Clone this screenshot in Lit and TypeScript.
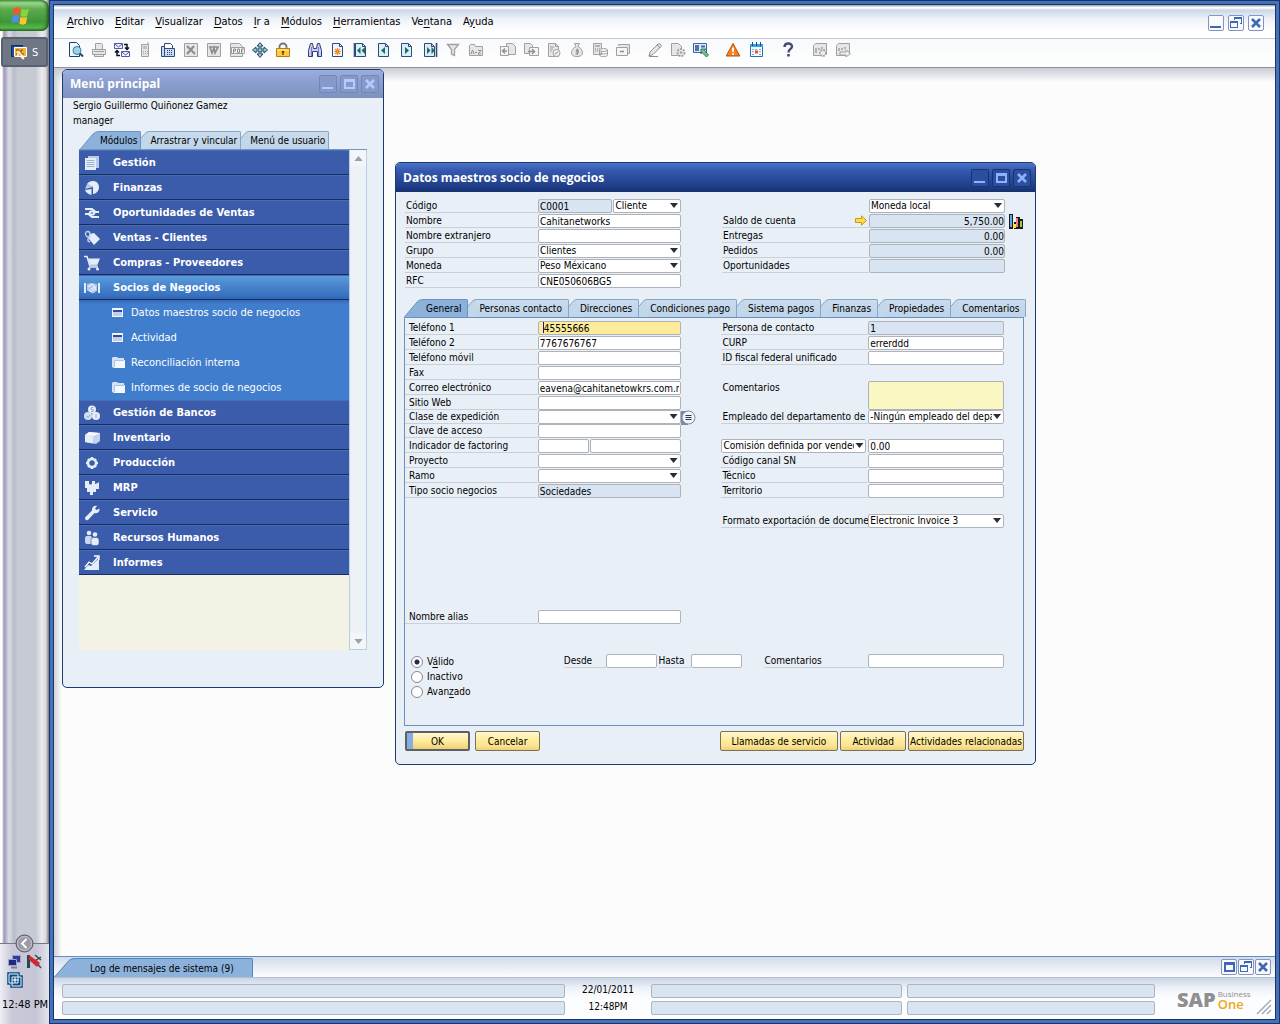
import { LitElement, html, css, svg, nothing } from "lit";
import { customElement, state } from "lit/decorators.js";
import { classMap } from "lit/directives/class-map.js";

type Accel = [string, string, string];

const MENUS: Accel[] = [
  ["", "A", "rchivo"], ["", "E", "ditar"], ["", "V", "isualizar"], ["", "D", "atos"], ["", "I", "r a"],
  ["", "M", "ódulos"], ["", "H", "erramientas"], ["Ve", "n", "tana"], ["A", "y", "uda"],
];

/* ---- toolbar glyphs, 16 x 16 ---- */
const page = (fill: string, stroke: string) => svg`<path d="M2.500 1.500h7l3 3v10h-10z" fill=${fill} stroke=${stroke}/><path d="M9.500 1.500v3h3" fill="none" stroke=${stroke}/>`;
const G = "#a0a0a0";
const L = "#e6e6e6";
const N = "#2f4a7c";

const ICONS: Record<string, unknown> = {
  preview: svg`<path d="M1.500 .5h7l3 3v11h-10z" fill="#eef6ff" stroke="#24406f"/><circle cx="9" cy="8.500" r="4" fill="#9bd4e8" stroke="#3d7b9b"/><path d="M12 11.500l3 3" stroke="#24406f" stroke-width="2"/>`,
  print: svg`<path d="M4.500 7V1.500h6l1 1V7M1.500 7.500h13v5h-13zM3.500 12.500h9v2h-9z" fill=${L} stroke=${G}/><path d="M3 9.500h10" stroke=${G}/>`,
  mail: svg`<path d="M.5 1.500h8v5h-8zM7.500 9.500h8v5h-8z" fill="#eef0ff" stroke="#5258a5"/><path d="M1 2l3.500 3L8 2M8 10l3.500 3L15 10" fill="none" stroke="#5258a5"/><path d="M10 2.500h3V7M11 5.500l2 2 2-2M6 13.500H3V9M1 10.500l2-2 2 2" fill="none" stroke="#111" stroke-width="1.500"/>`,
  phone: svg`<path d="M4.500 2.500h7v12h-7zM11 2.500V0" fill=${L} stroke=${G}/><path d="M6 4h4v3H6z" fill="#bdbdbd"/><path d="M6 9h1v1H6zM8 9h1v1H8zM10 9h1v1h-1zM6 11h1v1H6zM8 11h1v1H8zM10 11h1v1h-1z" fill=${G}/>`,
  fax: svg`<path d="M4.500 7V1.500h6l2 2V7" fill="#fff" stroke=${N}/><path d="M1.500 4.500h3v10h-3zM4.500 6.500h10v8h-10z" fill="#c9d8ef" stroke=${N}/><path d="M7 8h1v1H7zM9 8h1v1H9zM11 8h1v1h-1zM7 10h1v1H7zM9 10h1v1H9zM11 10h1v1h-1zM7 12h1v1H7zM9 12h1v1H9zM11 12h1v1h-1z" fill=${N}/>`,
  excel: svg`<path d="M1.500 1.500h13v13h-13z" fill=${L} stroke=${G}/><path d="M4 4l8 8M11 4l-7 8" stroke="#8e8e8e" stroke-width="2.200"/>`,
  word: svg`<path d="M1.500 1.500h13v13h-13z" fill=${L} stroke=${G}/><path d="M3 5h10M4 5l2 6 2-5 1 5 3-6" fill="none" stroke="#8e8e8e" stroke-width="1.700"/>`,
  pdf: svg`<path d="M1.500 1.500h9l3 3v10h-12z" fill=${L} stroke=${G}/><path d="M2.500 5.500h13v6h-13z" fill="#f4f4f4" stroke=${G}/><path d="M4.500 11V7h2v2h-2M8.500 7v3.500h2V7zM12.500 11V7h2.500M12.500 9H14" fill="none" stroke="#8e8e8e"/>`,
  move: svg`<path d="M8 .7L11 4H9v3h3V5l3.500 3-3.500 3V9H9v3h2l-3 3.400L5 12h2V9H4v2L.5 8 4 5v2h3V4H5z" fill="#8fc9c4" stroke="#23406f"/>`,
  lock: svg`<path d="M4.500 7V4.500a3.500 3 0 0 1 7 0V7" fill="none" stroke="#77736a" stroke-width="1.800"/><path d="M1.500 6.500h13v8h-13z" fill="#ffc93c" stroke="#b97b12"/><path d="M2 8h12" stroke="#fff0a8"/><circle cx="8" cy="10" r="1.300" fill="#6b4300"/><path d="M8 10v3" stroke="#6b4300" stroke-width="1.300"/>`,
  find: svg`<path d="M3.500 1.500h2l1 5h3l1-5h2l2 7v6h-4v-5h-5v5h-4v-6z" fill="#c9cef2" stroke="#303a79"/><path d="M4.500 5v9M11.500 5v9" stroke="#747fc1"/>`,
  add: svg`${page("#eef6ff", N)}<path d="M7.500 6v7M4 9.500h7M5 7l5 5M10 7l-5 5" stroke="#f08a24" stroke-width="1.200"/>`,
  first: svg`${page("#d9eef5", N)}<path d="M1.500 1v14" stroke=${N} stroke-width="1.600"/><path d="M7.500 5v7L4 8.500zM12 5v7L8.500 8.500z" fill="#1f6b62"/>`,
  prev: svg`${page("#d9eef5", N)}<path d="M9 5v7L5 8.500z" fill="#1f6b62"/>`,
  next: svg`${page("#d9eef5", N)}<path d="M6 5v7l4-3.500z" fill="#1f6b62"/>`,
  last: svg`${page("#d9eef5", N)}<path d="M14.500 1v14" stroke=${N} stroke-width="1.600"/><path d="M5 5v7l3.500-3.500zM9.500 5v7L13 8.500z" fill="#1f6b62"/>`,
  filter: svg`<path d="M2.500 2.500h11l-4 5v6l-3-1.500V7.500z" fill=${L} stroke=${G} stroke-width="1.300"/>`,
  sort: svg`<path d="M1.500 13.500v-10l1-1h4l1 2h7v9z" fill=${L} stroke=${G}/><path d="M3 12l1.500-4L6 12M7 10.500h2M10 8.500h3l-3 3.500h3" fill="none" stroke="#8e8e8e"/>`,
  copyFrom: svg`<path d="M6.500 1.500h6l3 3v8h-9z" fill=${L} stroke=${G}/><path d="M.5 4.500h8v9h-8z" fill="#f4f4f4" stroke=${G}/><path d="M7 9H2.500M5 6.500L2.500 9 5 11.500" fill="none" stroke="#8e8e8e" stroke-width="1.300"/>`,
  copyTo: svg`<path d="M1.500 1.500h6l2 2v8h-8z" fill=${L} stroke=${G}/><path d="M6.500 5.500h9v8h-9z" fill="#f4f4f4" stroke=${G}/><path d="M5 9.500h6.500M9 7l2.500 2.500L9 12" fill="none" stroke="#8e8e8e" stroke-width="1.300"/>`,
  profit: svg`${page(L, G)}<path d="M4 5h4M4 7h3M4 9h2" stroke=${G}/><circle cx="10.500" cy="11" r="3.500" fill="#eee" stroke=${G}/><path d="M9 12l3-2" stroke="#8e8e8e"/>`,
  money: svg`<path d="M5.500 1.500h5l-1.500 3c3 1.500 4.500 4 4.500 6.500 0 2.500-2 3.500-5.500 3.500S2.500 13.500 2.500 11c0-2.500 1.500-5 4.500-6.500z" fill=${L} stroke=${G}/><path d="M10 8H7.500L7 9.500h2.500l-.5 2H6.500M8.200 6.500v6.500" fill="none" stroke="#8e8e8e"/>`,
  calc: svg`<path d="M1.500 1.500h8v11h-8z" fill=${L} stroke=${G}/><path d="M3 4h5M3 7h1M5 7h1M7 7h1M3 9h1M5 9h1" stroke=${G} stroke-width="1.400"/><ellipse cx="11.500" cy="8" rx="4" ry="1.500" fill="#f4f4f4" stroke=${G}/><path d="M7.500 8v5c0 2 8 2 8 0V8M7.500 10.500c0 2 8 2 8 0" fill="none" stroke=${G}/>`,
  card: svg`<path d="M3.500 4V2.500h11v9h-2" fill=${L} stroke=${G}/><path d="M1.500 5.500h11v8h-11z" fill="#f4f4f4" stroke=${G}/><path d="M5 9.500h4" stroke="#8e8e8e" stroke-width="1.500"/>`,
  pencil: svg`<path d="M2 14l1-4 8-8c1.500-1 3.500.5 3 2.500l-8 8z" fill=${L} stroke="#8f8f8f"/><path d="M2 14.500h9M10 3l3 3" stroke="#8f8f8f"/>`,
  formGear: svg`<path d="M1.500 1.500h7l3 3v9h-10z" fill=${L} stroke=${G}/><circle cx="11" cy="10.500" r="3.500" fill="#eee" stroke=${G} stroke-width="2" stroke-dasharray="2 1"/><circle cx="11" cy="10.500" r="1.300" fill=${G}/>`,
  query: svg`<path d="M.5 1.500h13v9H.5z" fill="#dcecfb" stroke="#3668ae"/><path d="M2 4h4M2 6h4M2 8h4" stroke="#2a4b8d" stroke-width="1.300"/><path d="M8 3.500h4v2H8z" fill="#3668ae"/><path d="M8 7h5l-1.500 1.500 4 4.500-2 2-4.500-4.500L8 12z" fill="#6cc48f" stroke="#1c6546" stroke-width=".8"/>`,
  alert: svg`<path d="M8 1.500l6.800 12.500H1.200z" fill="#f58220" stroke="#b24f0b" stroke-linejoin="round"/><path d="M8 5.500v4.500M8 11.200V13" stroke="#fff" stroke-width="1.800"/>`,
  calendar: svg`<path d="M2.500 2.500h12v12h-12z" fill="#f4fbff" stroke="#2b6db4"/><path d="M2 2h13v3H2z" fill="#3aa0dc"/><path d="M4.500 0v4M8.500 0v4M12.500 0v4" stroke="#0f4f93"/><path d="M4 7h2v1H4zM7 7h2v1H7zM11 7h2v1h-2zM4 9h2v1H4zM11 9h2v1h-2zM4 12h2v1H4zM11 12h2v1h-2z" fill="#84a9c9"/><path d="M7 8.500h3v3H7z" fill="#ee4d33"/>`,
  help: svg`<path d="M4.500 5c0-4.500 7.500-4.500 7.500-.5 0 2.500-3.500 2.500-3.500 6" fill="none" stroke="#454a76" stroke-width="2.400"/><path d="M7.200 12h2.600v2.500H7.200z" fill="#454a76"/>`,
  gridGear: svg`<path d="M1.500 3.500l2-2h11v10l-2 2h-11z" fill=${L} stroke=${G}/><path d="M4 6v5M7 6v2M10 5v2" stroke=${G} stroke-width="1.500"/><circle cx="11" cy="11" r="3" fill="#eee" stroke=${G} stroke-width="1.800" stroke-dasharray="1.800 1"/>`,
  gridOut: svg`<path d="M1.500 3.500l2-2h11v10l-2 2h-11z" fill=${L} stroke=${G}/><path d="M4 6v3M7 6v2M10 5v2" stroke=${G} stroke-width="1.500"/><path d="M5 10h6V8l4.500 3.500L11 15v-2H5z" fill="#eee" stroke=${G}/>`,
};

const TOOLBAR: { name: string; label: string; off?: boolean }[][] = [
  [
    { name: "preview", label: "Presentación preliminar" }, { name: "print", label: "Imprimir", off: true },
    { name: "mail", label: "Correo" }, { name: "phone", label: "SMS", off: true }, { name: "fax", label: "Fax" },
    { name: "excel", label: "Excel", off: true }, { name: "word", label: "Word", off: true },
    { name: "pdf", label: "PDF", off: true }, { name: "move", label: "Iniciar aplicación" }, { name: "lock", label: "Bloquear" },
  ],
  [
    { name: "find", label: "Buscar" }, { name: "add", label: "Crear" }, { name: "first", label: "Primer registro" },
    { name: "prev", label: "Registro anterior" }, { name: "next", label: "Registro siguiente" },
    { name: "last", label: "Último registro" }, { name: "filter", label: "Filtrar", off: true },
    { name: "sort", label: "Clasificar", off: true },
  ],
  [
    { name: "copyFrom", label: "Documento base", off: true }, { name: "copyTo", label: "Documento destino", off: true },
    { name: "profit", label: "Beneficio bruto", off: true }, { name: "money", label: "Medios de pago", off: true },
    { name: "calc", label: "Volumen y peso", off: true }, { name: "card", label: "Diario", off: true },
  ],
  [{ name: "pencil", label: "Modo de edición", off: true }, { name: "formGear", label: "Configuración", off: true }, { name: "query", label: "Consultas" }],
  [{ name: "alert", label: "Alertas" }, { name: "calendar", label: "Calendario" }],
  [{ name: "help", label: "Ayuda" }],
  [{ name: "gridGear", label: "Diseño", off: true }, { name: "gridOut", label: "Exportar diseño", off: true }],
];

/* ---- module glyphs, 16 x 16, light on blue ---- */
const W = "#e4edf8";
const B = "#3b5bab";
const MODULE_ICONS: Record<string, unknown> = {
  docs: svg`<path d="M4 1h11v12H4z" fill="#b8c8e6"/><path d="M1 3h11v12H1z" fill=${W}/><path d="M2.500 5.500h8M2.500 7.500h8M2.500 9.500h8M2.500 11.500h8" stroke="#9db0d8"/>`,
  pie: svg`<path d="M9 7L3 4C6-1 15 0 15 7c0 4-3 7-6 7z" fill=${W}/><path d="M7.500 9v6C4 14.500 1.500 12 1 10z" fill=${W}/><path d="M3 4l6 3-8 2z" fill="#b9caea"/>`,
  opp: svg`<path d="M1 4h7l3 2.500H6.500L5 9H1M15 12H8l-3-2.500h4.500L11 7h4" fill="none" stroke=${W} stroke-width="2"/>`,
  tag: svg`<path d="M6 4l4-1 6 6-6 6-5-6z" fill=${W}/><path d="M6 6C4 8 1 6 1.500 3.500 2 .5 6 1 6 4c0 3-3 4-2 7l2 1" fill="none" stroke="#c2d2ee" stroke-width="1.400"/>`,
  cart: svg`<path d="M0 1.500h3l2.500 8.500h8" fill="none" stroke=${W} stroke-width="1.500"/><path d="M4 3.500h12l-2.500 6H6z" fill=${W}/><path d="M5 12h9" stroke=${W} stroke-width="1.500"/><circle cx="5" cy="14" r="1.500" fill=${W}/><circle cx="13.500" cy="14" r="1.500" fill=${W}/>`,
  shake: svg`<path d="M0 3h2v10H0zM14 3h2v10h-2z" fill=${W}/><path d="M3 4l4-1 6 1v7l-4 2.500-6-3z" fill="#a9c8ec"/><path d="M4 7l4-3 4 4M5 10l3 2M7 8l3 3M9 7l3 3" stroke=${W} stroke-width="1.200" fill="none"/>`,
  coins: svg`<circle cx="8" cy="4.500" r="4" fill=${W}/><circle cx="4" cy="11" r="4" fill="#d1dff2"/><circle cx="12" cy="11" r="4" fill=${W}/><path d="M9.500 2.500h-2l-.3 2h2v2H7" fill="none" stroke="#8ea8d6"/><path d="M3 11l1 1.500L6 10M12 9v4" stroke="#8ea8d6" fill="none"/>`,
  box: svg`<path d="M1 5l4-3 11 1v8l-4 3L1 12z" fill="#c7d0ee"/><path d="M1 5l8 1v7.500L1 12z" fill=${W}/><path d="M5 2l11 1-6 3-9-1z" fill="#f6f9ff"/>`,
  gear: svg`<circle cx="8" cy="8" r="4" fill="none" stroke=${W} stroke-width="2.500"/><path d="M8 2v2.500M8 11.500V14M2 8h2.500M11.500 8H14M4 4l1.500 1.500M10.500 10.500L12 12M12 4l-1.500 1.500M5.500 10.500L4 12" stroke=${W} stroke-width="2.400"/>`,
  puzzle: svg`<path d="M1 1h4v2c0 2 3 2 3 0V1h3v3l4-1v6h-3v3H9v3H6v-3H3V8H1z" fill=${W}/><path d="M12 4l3-2v6" fill=${W}/>`,
  wrench: svg`<path d="M1 12.500l7-7C7.500 2.500 10 0 13 1l-2 2.500 1.500 1.500L15.500 3.500C16 7 13 9 10.500 8L4 15c-2 1-3.500-1-3-2.500z" fill=${W}/>`,
  people: svg`<circle cx="5" cy="3" r="2.300" fill=${W}/><rect x="1" y="6" width="7" height="8" rx="2" fill="#c9d7ef"/><circle cx="11" cy="4.500" r="2.300" fill=${W}/><rect x="7" y="7.500" width="8" height="8" rx="2.500" fill=${W} stroke=${B} stroke-width=".6"/>`,
  chart: svg`<path d="M0 15l4-5 3 1 5-5 3-3v12z" fill=${W}/><path d="M1 12l4-5 3 2 6-7M10 1h5v4" fill="none" stroke="#fff" stroke-width="1.300"/>`,
  win: svg`<path d="M0 3h11v9H0z" fill="#f2f5fb"/><path d="M1 5h9v2H1z" fill="#2e4e9d"/><path d="M1 7h9v4H1z" fill="#c3cfe8"/>`,
  folder: svg`<path d="M0 3l1-1h4l1 1h6v2H3l-1 8-2-1z" fill="#d3e2f4"/><path d="M3 5h10v8H2V6z" fill="#f4f7fc"/><path d="M2.500 12V5.500H12" fill="none" stroke="#a9c4e4"/>`,
};

interface Module { icon: string; label: string; children?: { icon: string; label: string }[]; }
const MODULES: Module[] = [
  { icon: "docs", label: "Gestión" },
  { icon: "pie", label: "Finanzas" },
  { icon: "opp", label: "Oportunidades de Ventas" },
  { icon: "tag", label: "Ventas - Clientes" },
  { icon: "cart", label: "Compras - Proveedores" },
  {
    icon: "shake", label: "Socios de Negocios", children: [
      { icon: "win", label: "Datos maestros socio de negocios" },
      { icon: "win", label: "Actividad" },
      { icon: "folder", label: "Reconciliación interna" },
      { icon: "folder", label: "Informes de socio de negocios" },
    ],
  },
  { icon: "coins", label: "Gestión de Bancos" },
  { icon: "box", label: "Inventario" },
  { icon: "gear", label: "Producción" },
  { icon: "puzzle", label: "MRP" },
  { icon: "wrench", label: "Servicio" },
  { icon: "people", label: "Recursos Humanos" },
  { icon: "chart", label: "Informes" },
];

interface Field {
  label: string;
  value?: string;
  kind?: "text" | "select" | "readonly" | "number" | "area" | "gap";
  extra?: "code" | "focus" | "arrow" | "list" | "split" | "commission" | "bare";
}

const HEAD_LEFT: Field[] = [
  { label: "Código", value: "C0001", extra: "code" },
  { label: "Nombre", value: "Cahitanetworks" },
  { label: "Nombre extranjero" },
  { label: "Grupo", value: "Clientes", kind: "select" },
  { label: "Moneda", value: "Peso Méxicano", kind: "select" },
  { label: "RFC", value: "CNE050606BG5" },
];
const HEAD_RIGHT: Field[] = [
  { label: "Moneda", value: "Moneda local", kind: "select", extra: "bare" },
  { label: "Saldo de cuenta", value: "5,750.00", kind: "number", extra: "arrow" },
  { label: "Entregas", value: "0.00", kind: "number" },
  { label: "Pedidos", value: "0.00", kind: "number" },
  { label: "Oportunidades", kind: "number" },
];
const BODY_LEFT: Field[] = [
  { label: "Teléfono 1", value: "45555666", extra: "focus" },
  { label: "Teléfono 2", value: "7767676767" },
  { label: "Teléfono móvil" },
  { label: "Fax" },
  { label: "Correo electrónico", value: "eavena@cahitanetowkrs.com.mx" },
  { label: "Sitio Web" },
  { label: "Clase de expedición", kind: "select", extra: "list" },
  { label: "Clave de acceso" },
  { label: "Indicador de factoring", extra: "split" },
  { label: "Proyecto", kind: "select" },
  { label: "Ramo", kind: "select" },
  { label: "Tipo socio negocios", value: "Sociedades", kind: "readonly" },
];
const BODY_RIGHT: Field[] = [
  { label: "Persona de contacto", value: "1", kind: "readonly" },
  { label: "CURP", value: "errerddd" },
  { label: "ID fiscal federal unificado" },
  { label: "", kind: "gap" },
  { label: "Comentarios", kind: "area" },
  { label: "Empleado del departamento de ventas", value: "-Ningún empleado del departamento-", kind: "select" },
  { label: "", kind: "gap" },
  { label: "Comisión definida por vendedor", value: "0.00", extra: "commission" },
  { label: "Código canal SN" },
  { label: "Técnico" },
  { label: "Territorio" },
  { label: "", kind: "gap" },
  { label: "Formato exportación de documento", value: "Electronic Invoice 3", kind: "select" },
];

const FORM_TABS = ["General", "Personas contacto", "Direcciones", "Condiciones pago", "Sistema pagos", "Finanzas", "Propiedades", "Comentarios"];
const MENU_TABS = ["Módulos", "Arrastrar y vincular", "Menú de usuario"];

const CONTROL_GLYPHS: Record<string, unknown> = {
  Minimizar: svg`<path d="M1 10h11v2H1z" fill="currentColor"/>`,
  Maximizar: svg`<path d="M2 2h11v10H2zM4 5v5h7V5z" fill="currentColor" fill-rule="evenodd"/>`,
  Restaurar: svg`<path d="M5 1h8v7h-2V7h1V3H6v1H5zM1 5h8v7H1zM2 7v4h6V7z" fill="currentColor" fill-rule="evenodd"/>`,
  Cerrar: svg`<path d="M3 3l8 8M11 3l-8 8" stroke="currentColor" stroke-width="2.600"/>`,
};

@customElement("app-root")
export class AppRoot extends LitElement {
  @state() private menuTab = 0;
  @state() private formTab = 0;
  @state() private openModule = "Socios de Negocios";

  static styles = css`
    :host {
      display: block;
      font: 11px/15px "DejaVu Sans Condensed", "DejaVu Sans", sans-serif;
      color: #000;
    }
    * { box-sizing: border-box; }
    button, input, select, textarea { font: inherit; color: inherit; margin: 0; }
    button { padding: 0; border: 0; background: none; white-space: nowrap; }
    svg { display: block; flex: none; }
    u { text-underline-offset: 2px; }

    .screen { display: grid; grid-template-columns: 49px minmax(0, 1fr); min-height: 100vh; }

    .taskbar {
      display: flex; flex-direction: column;
      background: linear-gradient(90deg, #fdfdfe 0 2px, #9b96b4 4px, #dcdce8 9px, #b9bcc8 14px, #c6cbd3 18px, #c6cbd3 36px, #ececf0 42px, #d8d8dc 46px, #77777f 49px);
    }
    .start {
      height: 31px; display: flex; align-items: center; justify-content: center; padding-right: 8px;
      border-radius: 0 8px 8px 0;
      background: linear-gradient(#5fb052, #9bd78c 3px, #5cab50 9px, #3f9637 22px, #57b84c 28px, #2a6b25);
      box-shadow: inset -2px 0 3px #1f5b1b;
    }
    .task {
      height: 30px; margin: 6px 1px 0; display: flex; align-items: center; gap: 5px; padding-left: 8px;
      color: #fff; background: #6f7684; border: 2px solid #596070; border-radius: 3px;
    }
    .tray {
      margin-top: auto; height: 81px; display: grid; grid-template-columns: 15px 17px; grid-template-rows: 16px 18px 1fr;
      gap: 2px 4px; padding: 10px 0 12px 7px; position: relative; border-top: 1px solid #77778a;
      background: linear-gradient(90deg, #eeeef4, #c9c9da 12px, #c5c5d6 36px, #e3e3ec);
    }
    .chevron { position: absolute; left: 15px; top: -10px; }
    .clock { grid-column: 1 / -1; align-self: end; margin-left: -5px; white-space: nowrap; }

    .frame {
      display: flex; flex-direction: column; min-width: 0;
      border: 1px solid #1d3462; padding: 4px;
      box-shadow: inset 0 0 0 3px #4271bd, inset 0 0 0 4px #1d3462;
      background: #fcfcfc;
    }
    .menubar {
      height: 34px; display: flex; align-items: center; justify-content: space-between;
      padding: 0 11px 1px 13px; border-bottom: 1px solid #c3c8d6;
      background: linear-gradient(#a9aebb 0 1px, #fff 2px 3px, #cbd7e8 5px, #eef2f8 14px, #fff 26px);
    }
    .menus { display: flex; gap: 11px; }
    .controls { display: flex; gap: 4px; }
    .menubar .controls { padding-top: 3px; }
    .ctl { width: 16px; height: 16px; display: grid; place-items: center; color: #3f67b5; background: #f7f9fd; border: 1px solid #8593bd; border-radius: 2px; }
    .ctl svg { width: 14px; height: 14px; }
    .toolbar {
      height: 29px; display: flex; align-items: center; gap: 9px; padding: 0 10px 6px;
      border-bottom: 1px solid #8d929c; background: linear-gradient(#f7f9fb, #fff);
    }
    .group { display: flex; }
    .tool { width: 23px; height: 20px; display: grid; place-items: center; }

    .desk {
      flex: 1; position: relative; min-height: 700px;
      background: linear-gradient(#c8ccd2, rgba(252, 252, 252, 0) 14px), linear-gradient(90deg, #cfd2d8, #fcfcfc 8px);
    }
    .window { position: absolute; background: #e8eff6; border: 1px solid #1f3a70; border-radius: 5px; overflow: hidden; font-size: 10px; }
    .menu-window { left: 8px; top: 1px; width: 322px; }
    .form-window { left: 341px; top: 94px; width: 641px; }
    .title { display: flex; align-items: center; justify-content: space-between; height: 29px; padding: 0 4px 0 7px; color: #fff; background: linear-gradient(#4a74c8, #3358ad 8px, #1f3d86 24px, #16306e); }
    .title.idle { height: 28px; background: linear-gradient(#9aaedf, #8c9fd0 12px, #7e92bd); }
    .title h2 { margin: 0; font: 700 12px/18px "Open Sans", "Noto Sans", sans-serif; }
    .title .controls { gap: 3px; }
    .title .ctl { width: 18px; height: 18px; color: #8db2ff; background: #2c4e9f; border-color: #19336f; }
    .title.idle .ctl { color: #b3cbff; background: #8799c9; border-color: #7387b5; }

    .who { margin: 0; padding: 0 10px; }
    .tabs { display: flex; position: relative; }
    .tab { display: flex; height: 18px; }
    .tab .slant { width: 8px; height: 18px; fill: #c3d7ea; stroke: #86a6c6; }
    .tab .slant.wide { width: 19px; }
    .tab .cap { height: 18px; line-height: 18px; padding: 0 3px 0 1px; border: solid #86a6c6; border-width: 1px 1px 0 0; border-radius: 0 2px 0 0; background: linear-gradient(#cbdcec, #bdd3e8); }
    .tab.on .cap { background: #8cb2dc; border-color: #6d92bd; }
    .tab.on .slant { fill: #8cb2dc; stroke: #6d92bd; }
    .form-window .tab .cap { padding: 0 6px 0 3px; }
    .menu-window .tabs { margin: 3px 0 0 17px; }
    .form-window .tabs { margin-top: 10px; }

    .browser { display: grid; grid-template-columns: minmax(0, 1fr) 18px; height: 501px; margin: 0 16px 37px; border-top: 1px solid #7396bd; }
    .modules { margin: 0; padding: 0; list-style: none; background: #f4f2e4; overflow: hidden; font-size: 11px; }
    .module { display: flex; align-items: center; gap: 13px; width: 100%; height: 25px; padding-left: 5px; font-weight: 700; color: #fff; background: #3b5bab; border-top: 1px solid #476cb8; border-bottom: 1px solid #152c5c; }
    .module.open { background: linear-gradient(#5a9bdc, #3169bb); }
    .sub { margin: 0; padding: 0; list-style: none; background: linear-gradient(#3467b3, #417dcd 4px); }
    .entry { display: flex; align-items: center; gap: 4px; width: 100%; height: 25px; padding-left: 33px; color: #fff; }
    .scroll { display: flex; flex-direction: column; justify-content: space-between; border: 1px solid #b8cfe5; border-top: 0; background: #ecf1f7; }
    .scroll button { height: 16px; display: grid; place-items: center; background: #f3f5f8; }

    .form { padding: 7px 11px 13px 8px; margin: 0; }
    .pair { display: grid; grid-template-columns: 276fr 41fr 283fr 19fr; }
    .pair.head { padding-left: 1px; }
    .col { display: grid; grid-auto-rows: 15px; align-content: start; min-width: 0; }
    .col.a { grid-template-columns: 133fr 143fr; grid-column: 1; }
    .col.b { grid-template-columns: 147fr 136fr; grid-column: 3; }
    .main-fields .col { grid-template-rows: repeat(5, 15px) 14px 14px; }
    .lab { display: block; height: 14px; line-height: 14px; padding-left: 1px; overflow: hidden; white-space: nowrap; border-bottom: 1px solid #c9d0d7; min-width: 0; }
    .panel .col.a .lab { padding-left: 4px; }
    .lab.plain { border-bottom-color: transparent; }
    .cell { position: relative; display: flex; gap: 1px; height: 14px; min-width: 0; }
    .hold { position: relative; flex: 1; min-width: 0; display: flex; }
    .hold.code { flex: 1.1; }
    .box { width: 100%; min-width: 0; height: 14px; line-height: 12px; padding: 0 1px; background: #fff; border: 1px solid #adb3b9; border-radius: 2px; outline: 0; appearance: none; }
    select.box { padding-right: 11px; }
    .box.ro, .box.num { background: #d8e4f2; }
    .box.num { text-align: right; padding: 0; }
    .box.focus { background: #ffec9b; padding-left: 5px; }
    .caret::after { content: ""; position: absolute; left: 5px; top: 1px; width: 1px; height: 11px; background: #101c84; }
    .arrow::after { content: ""; position: absolute; right: 3px; top: 4px; width: 8px; height: 5px; background: #2a2d33; clip-path: polygon(0 0, 100% 0, 50% 100%); pointer-events: none; }
    .area { grid-column: 2; resize: none; background: #faf7c3; display: block; }
    .tall { grid-row: span 2; height: 29px; }
    .gap { grid-column: 1 / -1; }
    .float { position: absolute; top: 0; }
    .float.link { right: 2px; top: 1px; }
    .float.out { left: 100%; }
    .labwrap { position: relative; min-width: 0; }
    .labwrap .arrow { width: 145px; max-width: 100%; }

    .panel { border: 1px solid #6b92bf; padding: 3px 0 26px; }
    .alias { margin-top: 81px; }
    .validity { margin-top: 29px; display: grid; grid-template-columns: 159fr 42fr 51fr 2fr 32fr 52fr 22fr 104fr 136fr 19fr; }
    .radios { grid-row: 1; grid-column: 1; display: flex; flex-direction: column; padding-left: 6px; }
    .radio { display: flex; align-items: center; gap: 4px; height: 15px; }
    .radio input { appearance: none; width: 12px; height: 12px; border: 1px solid #85898f; border-radius: 50%; background: #fff; }
    .radio input:checked { background: radial-gradient(#23284e 0 2px, #fff 3px); }
    .validity .lab { padding-left: 0; }
    .validity .c4 { grid-column: 5; }
    .validity .c7 { grid-column: 8; }

    .actions { display: flex; justify-content: space-between; margin: 5px 0 0 1px; }
    .actions div { display: flex; gap: 2px; }
    .actions .main { gap: 5px; }
    .btn { height: 20px; min-width: 65px; padding: 0 1px; border: 1px solid #77705a; border-radius: 2px; background: linear-gradient(#fff8d2, #ffeb9c 8px, #fbe391 14px, #efcf77); }
    .btn.default { border: 2px solid #5d5f66; background: linear-gradient(90deg, #83aee0 0 6px, transparent 6px), linear-gradient(#fff8d2, #ffeb9c 8px, #efcf77); }
    .btn.roomy { padding: 0 11px; }

    .logbar { height: 21px; display: flex; align-items: flex-end; justify-content: space-between; border-top: 1px solid #5e8fc4; background: linear-gradient(#d3dcea, #fdfdfe); padding-right: 4px; font-size: 10px; }
    .logtab { display: flex; }
    .logtab .cap { height: 19px; line-height: 19px; padding: 0 18px 0 16px; background: #8cb2dc; border: solid #5585b8; border-width: 1px 1px 0 0; border-radius: 0 2px 0 0; }
    .logtab svg { fill: #8cb2dc; stroke: #5585b8; }
    .logbar .controls { gap: 1px; padding-bottom: 2px; }
    .status { display: grid; grid-template-columns: 503fr 86fr 256fr 248fr 112fr; grid-template-rows: 14px 14px; gap: 3px 0; height: 42px; padding: 6px 8px 4px; border-top: 1px solid #b5bfd0; background: linear-gradient(#c9d5e6, #eef2f8 10px, #fcfdfe 20px); position: relative; font-size: 10px; }
    .slot { height: 14px; background: #d8e4f2; border: 1px solid #adb5bd; border-radius: 2px; }
    .slot.sp { margin-right: 5px; }
    .when { text-align: center; line-height: 12px; }
    .brand { grid-column: 5; grid-row: 1 / span 2; display: flex; align-items: center; margin-left: 22px; font-family: "Open Sans", sans-serif; }
    .sap { font-size: 20px; line-height: 24px; font-weight: 800; color: #8f8f8f; }
    .biz { display: grid; margin-left: 2px; font-size: 8px; line-height: 9px; color: #8f8f8f; }
    .one { font-size: 13px; line-height: 12px; font-weight: 600; color: #f0a514; }
    .grip { position: absolute; right: 3px; bottom: 4px; }
  `;

  private controls(names: string[]) {
    return html`<div class="controls">${names.map(
      (n) => html`<button class="ctl" type="button" aria-label=${n}><svg viewBox="0 0 14 14" width="14" height="14">${CONTROL_GLYPHS[n]}</svg></button>`,
    )}</div>`;
  }

  private tabs(labels: string[], current: number, pick: (i: number) => void) {
    return html`<div class="tabs" role="tablist">${labels.map(
      (label, i) => html`<button type="button" class=${classMap({ tab: true, on: i === current })} role="tab" aria-selected=${i === current} @click=${() => pick(i)}>
        ${i === 0
          ? html`<svg class="slant wide" viewBox="0 0 19 18"><path d="M0 18.500L13 3Q15 .5 19.500 .5V18.500" /><path d="M19 1v17" stroke="none" /></svg>`
          : html`<svg class="slant" viewBox="0 0 8 18"><path d="M-1 8.500L4 2.500Q5.500 .5 8.500 .5V19H-1z" /></svg>`}
        <span class="cap">${label}</span>
      </button>`,
    )}</div>`;
  }

  private select(id: string, value = "", label?: string) {
    return html`<span class="hold arrow"><select class="box" id=${id} aria-label=${label ?? nothing}><option>${value}</option></select></span>`;
  }

  private control(f: Field, id: string) {
    if (f.kind === "select") return this.select(id, f.value, f.extra === "bare" ? f.label : undefined);
    if (f.extra === "code")
      return html`<span class="hold code"><input class="box ro" id=${id} .value=${f.value ?? ""} readonly /></span>${this.select(id + "t", "Cliente", "Tipo")}`;
    if (f.extra === "split")
      return html`<input class="box" id=${id} style="width:36%" /><input class="box" aria-label="Nombre de factoring" style="width:64%" />`;
    const classes = { box: true, ro: f.kind === "readonly", num: f.kind === "number", focus: f.extra === "focus" };
    return html`<span class=${classMap({ hold: true, caret: f.extra === "focus" })}><input
      class=${classMap(classes)} id=${id} .value=${f.value ?? ""} ?readonly=${f.kind === "readonly" || f.kind === "number"} /></span>`;
  }

  private fields(list: Field[], prefix: string) {
    return list.map((f, i) => {
      const id = `${prefix}${i}`;
      if (f.kind === "gap") return html`<span class="gap"></span>`;
      if (f.kind === "area")
        return html`<label class="lab plain tall" for=${id}>${f.label}</label><textarea class="box area tall" id=${id}></textarea>`;
      const label = f.extra === "bare"
        ? html`<span></span>`
        : f.extra === "commission"
          ? html`<span class="labwrap">${this.select(id + "c", f.label, "Tipo de comisión")}</span>`
          : html`<span class="labwrap"><label class="lab" for=${id}>${f.label}</label>${f.extra === "arrow"
              ? html`<svg class="float link" width="12" height="11" viewBox="0 0 12 11"><path d="M.5 3.500h6V.8l5 4.700-5 4.700V7.500h-6z" fill="#ffd94a" stroke="#c79a1c" /></svg>`
              : nothing}</span>`;
      return html`${label}<span class="cell">${this.control(f, id)}${f.extra === "list"
        ? html`<svg class="float out" width="15" height="15" viewBox="0 0 15 15"><path d="M0 1h7v14H0z" fill="#7d8ca0" /><circle cx="7.500" cy="7.500" r="6.500" fill="#eef3f9" stroke="#7d8ca0" /><path d="M4.500 5.500h6M4.500 7.500h6M4.500 9.500h6" stroke="#2c3a57" /></svg>`
        : nothing}${f.extra === "arrow"
        ? html`<svg class="float out" width="19" height="15" viewBox="0 0 19 15"><path d="M4 0h4v15H4zM9 8h3v7H9zM11 3h4v12h-4zM15 5h3v10h-3z" fill="#1a1a1a" /><path d="M5 1h2v12H5z" fill="#5fa8d8" /><path d="M8 10h3v4H8z" fill="#ffe13c" /><path d="M11 4h2v9h-2z" fill="#ef7f83" /><path d="M15 7h2v6h-2z" fill="#9bd03c" /></svg>`
        : nothing}</span>`;
    });
  }

  private moduleRow(m: Module) {
    const open = m.label === this.openModule;
    return html`<li>
      <button class=${classMap({ module: true, open })} aria-expanded=${open} @click=${() => (this.openModule = m.label)}>
        <svg width="16" height="16" viewBox="0 0 16 16">${MODULE_ICONS[m.icon]}</svg>${m.label}
      </button>
      ${open && m.children
        ? html`<ul class="sub">${m.children.map(
            (c) => html`<li><button class="entry"><svg width="15" height="15" viewBox="0 0 15 15">${MODULE_ICONS[c.icon]}</svg>${c.label}</button></li>`,
          )}</ul>`
        : nothing}
    </li>`;
  }

  private taskbar() {
    return html`<aside class="taskbar">
      <button class="start" aria-label="Inicio">
        <svg width="20" height="19" viewBox="0 0 18 17">
          <path d="M2.500 2q3-2 6 0L7.500 8q-3-1.500-6 0z" fill="#f0592b" /><path d="M9.500 2.500q3 1.500 6.500 0L14.500 9q-3 1.500-6 0z" fill="#8cd13f" />
          <path d="M1.500 9q3-2 6 0L6.500 15q-3-1.500-6 0z" fill="#4b8df0" /><path d="M8.500 9.700q3 1.500 6 0L13.500 16q-3 1.500-6 0z" fill="#fbc52b" />
        </svg>
      </button>
      <button class="task">
        <svg width="16" height="16" viewBox="0 0 16 16"><path d="M.5 1.500h11v11H.5z" fill="#1d4f9c" stroke="#0c2a5e" /><path d="M3.500 3.500h12v9h-12z" fill="#f2b33d" stroke="#fff" /><path d="M5 6h3v4H5M12 6h-2v4h3" fill="none" stroke="#7a4b12" /><path d="M7 7l6 7M7 7v5M10 13l3 2" stroke="#fff2d0" stroke-width="1.600" /></svg>S
      </button>
      <div class="tray">
        <svg class="chevron" width="19" height="19" viewBox="0 0 19 19"><circle cx="9.500" cy="9.500" r="8.500" fill="#9b9ba8" stroke="#55555f" /><circle cx="9.500" cy="9.500" r="7" fill="none" stroke="#c9c9d4" /><path d="M11.500 5L7 9.500l4.500 4.500" fill="none" stroke="#fff" stroke-width="2" /></svg>
        <svg width="15" height="15" viewBox="0 0 15 15"><path d="M5.500 1.500h8v7h-8z" fill="#2e3c9d" stroke="#9fa4c8" /><path d="M1.500 5.500h8v6h-8z" fill="#1d2a7e" stroke="#9fa4c8" /><path d="M4 13.500h6" stroke="#7c7f97" stroke-width="2" /></svg>
        <svg width="17" height="16" viewBox="0 0 17 16"><path d="M1 1h3v13H1z" fill="#1f4a58" /><path d="M15 3l-6 4 6 7M9 1l6 5" stroke="#3a4a52" stroke-width="1.500" fill="none" /><path d="M3 1l11 8-3 4-8-7z" fill="#d7262b" /></svg>
        <svg width="16" height="16" viewBox="0 0 16 16"><path d="M2 2h9v9H2zM5 5h9v9H5z" fill="none" stroke="#0d4a80" stroke-width="3.500" /><path d="M2 2h9v9H2zM5 5h9v9H5zM8 5v6M5 8h7" fill="none" stroke="#e9f4ff" /></svg>
        <span class="clock">12:48 PM</span>
      </div>
    </aside>`;
  }

  private menuWindow() {
    return html`<section class="window menu-window">
      <header class="title idle"><h2>Menú principal</h2>${this.controls(["Minimizar", "Maximizar", "Cerrar"])}</header>
      <p class="who">Sergio Guillermo Quiñonez Gamez</p>
      <p class="who">manager</p>
      ${this.tabs(MENU_TABS, this.menuTab, (i) => (this.menuTab = i))}
      <div class="browser">
        <ul class="modules">${MODULES.map((m) => this.moduleRow(m))}</ul>
        <div class="scroll">
          <button aria-label="Subir"><svg width="9" height="5" viewBox="0 0 10 6"><path d="M0 6l5-6 5 6z" fill="#9aa0a8" /></svg></button>
          <button aria-label="Bajar"><svg width="9" height="5" viewBox="0 0 10 6"><path d="M0 0l5 6 5-6z" fill="#9aa0a8" /></svg></button>
        </div>
      </div>
    </section>`;
  }

  private formWindow() {
    return html`<section class="window form-window">
      <header class="title"><h2>Datos maestros socio de negocios</h2>${this.controls(["Minimizar", "Maximizar", "Cerrar"])}</header>
      <form class="form" @submit=${(e: Event) => e.preventDefault()}>
        <div class="pair head">
          <div class="col a">${this.fields(HEAD_LEFT, "hl")}</div>
          <div class="col b">${this.fields(HEAD_RIGHT, "hr")}</div>
        </div>
        ${this.tabs(FORM_TABS, this.formTab, (i) => (this.formTab = i))}
        <div class="panel">
          <div class="pair main-fields">
            <div class="col a">${this.fields(BODY_LEFT, "bl")}</div>
            <div class="col b">${this.fields(BODY_RIGHT, "br")}</div>
          </div>
          <div class="pair alias"><div class="col a">${this.fields([{ label: "Nombre alias" }], "al")}</div></div>
          <div class="validity">
            <div class="radios">
              <label class="radio"><input type="radio" name="estado" checked /><span>V<u>á</u>lido</span></label>
              <label class="radio"><input type="radio" name="estado" /><span>Inactivo</span></label>
              <label class="radio"><input type="radio" name="estado" /><span>Avan<u>z</u>ado</span></label>
            </div>
            <label class="lab" for="desde">Desde</label><input class="box" id="desde" />
            <label class="lab c4" for="hasta">Hasta</label><input class="box" id="hasta" />
            <label class="lab c7" for="notas">Comentarios</label><input class="box" id="notas" />
          </div>
        </div>
        <div class="actions">
          <div class="main"><button class="btn default">OK</button><button type="button" class="btn">Cancelar</button></div>
          <div>
            <button type="button" class="btn roomy">Llamadas de servicio</button>
            <button type="button" class="btn roomy">Actividad</button>
            <button type="button" class="btn">Actividades relacionadas</button>
          </div>
        </div>
      </form>
    </section>`;
  }

  render() {
    return html`<div class="screen">
      ${this.taskbar()}
      <div class="frame">
        <nav class="menubar">
          <div class="menus">${MENUS.map(([a, k, b]) => html`<button>${a}<u>${k}</u>${b}</button>`)}</div>
          ${this.controls(["Minimizar", "Restaurar", "Cerrar"])}
        </nav>
        <div class="toolbar">${TOOLBAR.map(
          (g) => html`<div class="group">${g.map(
            (t) => html`<button class="tool" aria-label=${t.label} ?disabled=${t.off}><svg width="16" height="16" viewBox="0 0 16 16">${ICONS[t.name]}</svg></button>`,
          )}</div>`,
        )}</div>
        <main class="desk">${this.menuWindow()}${this.formWindow()}</main>
        <div class="logbar">
          <button class="logtab"><svg width="20" height="19" viewBox="0 0 20 19"><path d="M0 19.500L15 2.500Q17 .5 20.500 .5V19.500" /></svg><span class="cap">Log de mensajes de sistema (9)</span></button>
          ${this.controls(["Maximizar", "Restaurar", "Cerrar"])}
        </div>
        <footer class="status">
          <span class="slot"></span><span class="when">22/01/2011</span><span class="slot sp"></span><span class="slot"></span>
          <span class="slot"></span><span class="when">12:48PM</span><span class="slot sp"></span><span class="slot"></span>
          <div class="brand"><span class="sap">SAP</span><span class="biz">Business<span class="one">One</span></span></div>
          <svg class="grip" width="16" height="16" viewBox="0 0 16 16"><path d="M1 15L15 1M6 15l9-9M11 15l4-4" stroke="#9aa6b8" stroke-width="1.300" /></svg>
        </footer>
      </div>
    </div>`;
  }
}
